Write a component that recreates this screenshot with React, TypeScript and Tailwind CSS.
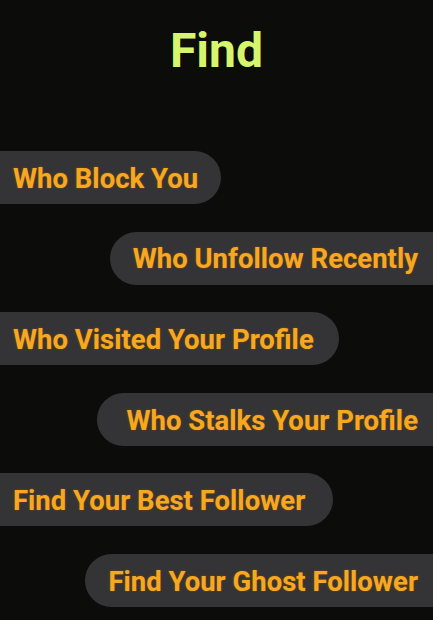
import React from "react";

const items: { label: string; side: "left" | "right"; w: string }[] = [
  { label: "Who Block You", side: "left", w: "w-[221px]" },
  { label: "Who Unfollow Recently", side: "right", w: "w-[323px]" },
  { label: "Who Visited Your Profile", side: "left", w: "w-[339px]" },
  { label: "Who Stalks Your Profile", side: "right", w: "w-[336px]" },
  { label: "Find Your Best Follower", side: "left", w: "w-[333px]" },
  { label: "Find Your Ghost Follower", side: "right", w: "w-[348px]" },
];

export default function App() {
  return (
    <div
      className="w-[433px] h-[620px] bg-[#0c0c0a] overflow-hidden flex flex-col"
      style={{ fontFamily: "Roboto, 'Liberation Sans', sans-serif" }}
    >
      <h1 className="text-center text-[48px] leading-none font-bold text-[#d6f56c] pt-[27px]">
        Find
      </h1>
      <div className="flex flex-col gap-[27.6px] mt-[76px]">
        {items.map((it) =>
          it.side === "left" ? (
            <div key={it.label} className="flex justify-start">
              <div
                className={`${it.w} h-[53px] bg-[#343436] rounded-r-full flex items-center pl-[13px] pt-[2px] text-[27.5px] font-bold whitespace-nowrap text-[#f7a823] [text-shadow:0_0_2px_#8a5200]`}
              >
                {it.label}
              </div>
            </div>
          ) : (
            <div key={it.label} className="flex justify-end">
              <div
                className={`${it.w} h-[53px] bg-[#343436] rounded-l-full flex items-center justify-end pr-[15px] pt-[2px] text-[27.5px] font-bold whitespace-nowrap text-[#f7a823] [text-shadow:0_0_2px_#8a5200]`}
              >
                {it.label}
              </div>
            </div>
          )
        )}
      </div>
    </div>
  );
}
